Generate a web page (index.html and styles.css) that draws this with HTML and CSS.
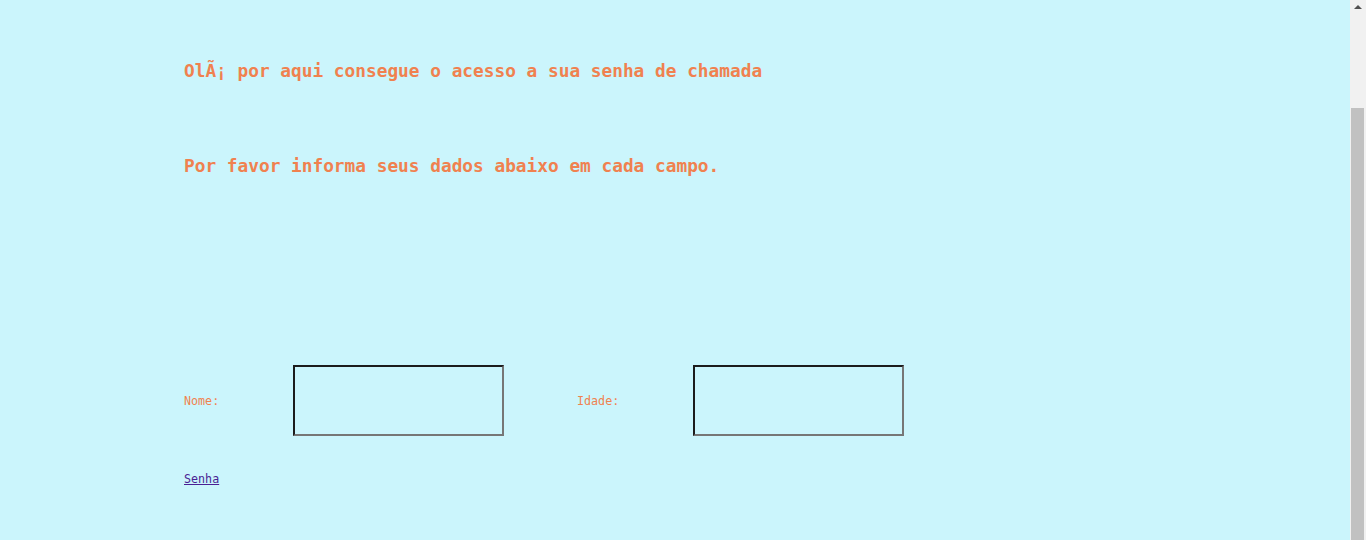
FILE: index.html
```html
<!DOCTYPE html>
<html lang="pt">
<head>
<meta charset="utf-8">
<title>Senha de chamada</title>
<link rel="stylesheet" href="styles.css">
</head>
<body>
<main class="page">
  <h2 class="title title-first">OlÃ¡ por aqui consegue o acesso a sua senha de chamada</h2>
  <h2 class="title title-second">Por favor informa seus dados abaixo em cada campo.</h2>
  <form class="form-row">
    <label class="label label-nome" for="nome">Nome:</label>
    <input class="field" id="nome" type="text">
    <label class="label label-idade" for="idade">Idade:</label>
    <input class="field" id="idade" type="text">
  </form>
  <a class="link" href="#">Senha</a>
</main>
<div class="scrollbar">
  <div class="scroll-arrow"></div>
  <div class="scroll-thumb"></div>
</div>
</body>
</html>
```
FILE: styles.css
```css
html, body {
  margin: 0;
  padding: 0;
  height: 100%;
  overflow: hidden;
}
body {
  background: #cbf5fc;
  font-family: "DejaVu Sans Mono", "Liberation Mono", monospace;
}
.page {
  padding: 59px 0 0 184px;
}
.title {
  margin: 0;
  font-size: 17.8px;
  line-height: 24px;
  font-weight: 700;
  color: #f0814f;
}
.title-second {
  margin-top: 71px;
}
.form-row {
  display: flex;
  align-items: center;
  margin-top: 187px;
  height: 71px;
}
.label {
  font-size: 11.7px;
  padding-top: 1px;
  color: #f0814f;
}
.label-nome {
  width: 109px;
}
.label-idade {
  width: 116px;
  margin-left: 73px;
}
.field {
  box-sizing: border-box;
  width: 211px;
  height: 71px;
  margin: 0;
  padding: 0;
  background: transparent;
  border-style: solid;
  border-width: 2px;
  border-color: #1c1c1c #767676 #767676 #1c1c1c;
}
.link {
  display: inline-block;
  margin-top: 35px;
  font-size: 11.7px;
  line-height: 16px;
  color: #4a1f94;
  text-decoration: underline;
}
.scrollbar {
  position: fixed;
  top: 0;
  right: 0;
  width: 16px;
  height: 100%;
  background: #f1f1f1;
}
.scroll-arrow {
  position: absolute;
  top: 5px;
  left: 4px;
  width: 0;
  height: 0;
  border-left: 4px solid transparent;
  border-right: 4px solid transparent;
  border-bottom: 4px solid #505050;
}
.scroll-thumb {
  position: absolute;
  top: 108px;
  left: 1px;
  right: 2px;
  bottom: 0;
  background: #c1c1c1;
}
```
